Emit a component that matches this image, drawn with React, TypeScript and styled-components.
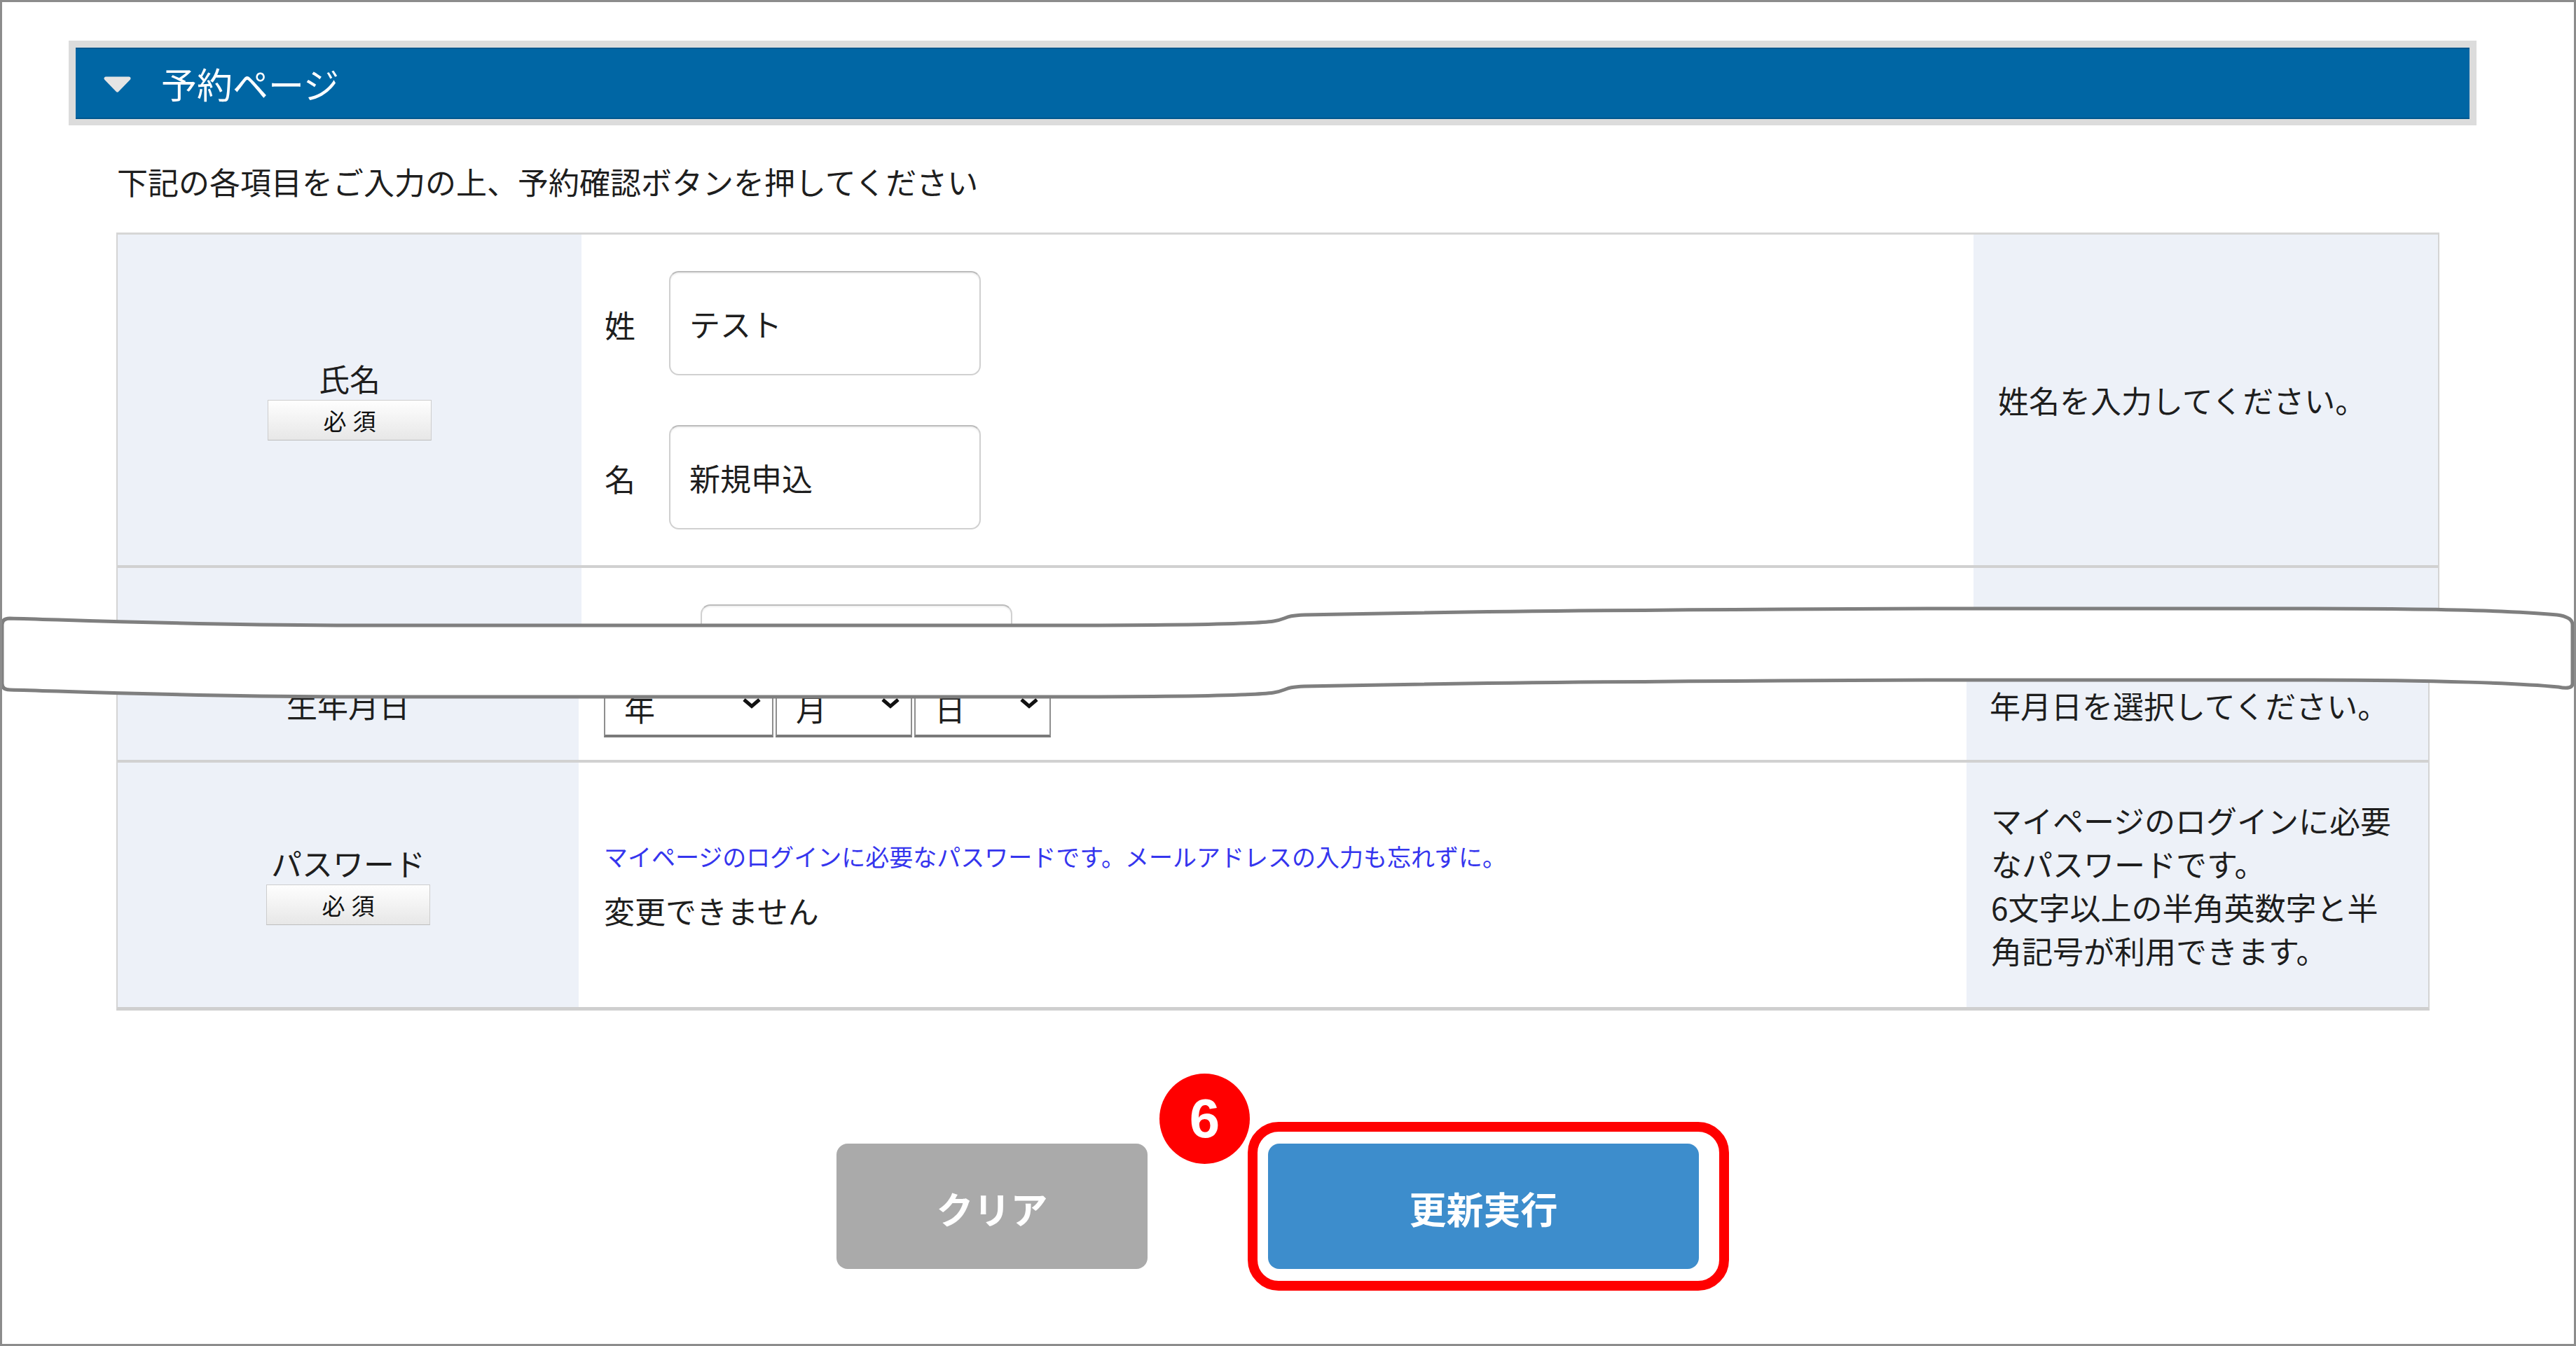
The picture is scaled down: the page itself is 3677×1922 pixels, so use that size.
import React from "react";
import styled, { createGlobalStyle } from "styled-components";

const GlobalStyle = createGlobalStyle`
  html, body {
    margin: 0;
    padding: 0;
    background: #ffffff;
  }
  body {
    font-family: "Noto Sans CJK JP", "Noto Sans", sans-serif;
    color: #1e1e1e;
  }
`;

const Frame = styled.div`
  position: relative;
  box-sizing: border-box;
  width: 3677px;
  height: 1922px;
  border: 3px solid #8c8c8c;
  background: #fff;
  overflow: hidden;
`;

const SectionHeader = styled.div`
  margin: 55px 139px 0 95px;
  padding: 10px 10px 9px;
  background: #dcdcdc;
`;

const HeaderBar = styled.div`
  display: flex;
  align-items: center;
  gap: 42px;
  box-sizing: border-box;
  height: 102px;
  padding-left: 39px;
  background: #0066a4;
  border-top: 2px solid #00578e;
  border-bottom: 2px solid #00578e;
  color: #fff;

  svg {
    margin-top: 4px;
  }
`;

const HeaderTitle = styled.h2`
  margin: 0;
  font-size: 51px;
  font-weight: 400;
  line-height: 1;
`;

const Intro = styled.p`
  margin: 54px 0 0 164px;
  font-size: 44px;
  line-height: 52px;
`;

const Fragment = styled.div<{ $width: number }>`
  box-sizing: border-box;
  width: ${(p) => p.$width}px;
  margin-left: 163px;
  border-left: 2px solid #d4d4d4;
  border-right: 2px solid #d4d4d4;
`;

const UpperFragment = styled(Fragment)`
  margin-top: 47px;
  border-top: 3px solid #d6d6d6;
`;

const LowerFragment = styled(Fragment)`
  border-bottom: 5px solid #cfcfcf;
`;

const Row = styled.div<{ $cols: string; $height: number; $divider?: number }>`
  display: grid;
  grid-template-columns: ${(p) => p.$cols};
  height: ${(p) => p.$height}px;
  border-bottom: ${(p) => p.$divider ?? 0}px solid #d1d1d1;
  overflow: hidden;
`;

const LabelCell = styled.div<{ $bottom?: number }>`
  display: flex;
  flex-direction: column;
  align-items: center;
  justify-content: ${(p) => (p.$bottom !== undefined ? "flex-end" : "center")};
  padding-bottom: ${(p) => p.$bottom ?? 0}px;
  background: #edf1f8;
`;

const LabelText = styled.span`
  font-size: 44px;
  line-height: 52px;
`;

const RequiredBadge = styled.span`
  display: flex;
  align-items: center;
  justify-content: center;
  box-sizing: border-box;
  width: 234px;
  height: 58px;
  margin-top: 5px;
  padding-left: 9px;
  border: 1px solid #cdcdcd;
  border-bottom-color: #bdbdbd;
  background: linear-gradient(#fefefe, #e7e7e7);
  font-size: 33px;
  letter-spacing: 9px;
  color: #111;
`;

const ContentCell = styled.div<{ $pad: number; $bottom?: number; $top?: number }>`
  display: flex;
  flex-direction: column;
  justify-content: ${(p) =>
    p.$bottom !== undefined ? "flex-end" : p.$top !== undefined ? "flex-start" : "center"};
  padding: ${(p) => p.$top ?? 0}px 0 ${(p) => p.$bottom ?? 0}px ${(p) => p.$pad}px;
  background: #fff;
`;

const NameFields = styled(ContentCell)`
  gap: 71px;
`;

const FieldLine = styled.div`
  display: flex;
  align-items: center;
  gap: 48px;
`;

const FieldLabel = styled.span`
  width: 44px;
  margin-top: 3px;
  font-size: 44px;
  line-height: 52px;
`;

const TextInput = styled.input`
  box-sizing: border-box;
  width: 445px;
  height: 149px;
  padding: 2px 0 0 27px;
  border: 2px solid #d0d0d0;
  border-top-color: #bcbcbc;
  border-radius: 14px;
  box-shadow: inset 0 2px 2px rgba(0, 0, 0, 0.06);
  background: #fff;
  font-family: inherit;
  font-size: 44px;
  color: #1e1e1e;
  outline: none;
`;

const NoteCell = styled.div<{ $pad: number; $bottom?: number; $lh?: number }>`
  display: flex;
  flex-direction: column;
  justify-content: ${(p) => (p.$bottom !== undefined ? "flex-end" : "center")};
  padding: 0 0 ${(p) => p.$bottom ?? 0}px ${(p) => p.$pad}px;
  background: #edf1f8;
  font-size: 44px;
  line-height: ${(p) => p.$lh ?? 52}px;
  white-space: nowrap;
`;

const SelectGroup = styled.div`
  display: flex;
  gap: 3px;
`;

const SelectBox = styled.div<{ $width: number }>`
  display: flex;
  align-items: center;
  justify-content: space-between;
  box-sizing: border-box;
  width: ${(p) => p.$width}px;
  height: 82px;
  padding: 0 15px 0 27px;
  border: 2px solid #8e8e8e;
  border-bottom: 4px solid #7a7a7a;
  background: #fff;
  font-size: 44px;
  line-height: 52px;

  svg {
    margin-bottom: 14px;
  }
`;

const HintText = styled.span`
  font-size: 34px;
  line-height: 44px;
  color: #3535ee;
  white-space: nowrap;
`;

const PlainText = styled.span`
  margin-top: 29px;
  font-size: 44px;
  line-height: 52px;
`;

const ButtonRow = styled.div`
  display: flex;
  justify-content: center;
  gap: 172px;
  box-sizing: border-box;
  width: 3316px;
  margin: 190px 0 0 163px;
  padding-right: 29px;
`;

const ActionButton = styled.button<{ $color: string; $width: number }>`
  width: ${(p) => p.$width}px;
  height: 179px;
  padding-top: 6px;
  border: none;
  border-radius: 16px;
  background: ${(p) => p.$color};
  color: #fff;
  font-family: inherit;
  font-size: 53px;
  font-weight: 700;
  cursor: pointer;
`;

const HighlightWrap = styled.div`
  position: relative;
  display: flex;
`;

const HighlightRing = styled.span`
  position: absolute;
  top: -31px;
  right: -43px;
  bottom: -31px;
  left: -29px;
  border: 14px solid #ff0000;
  border-radius: 44px;
  pointer-events: none;
`;

const StepBadge = styled.span`
  position: absolute;
  top: -100px;
  left: -155px;
  z-index: 2;
  display: flex;
  align-items: center;
  justify-content: center;
  width: 129px;
  height: 129px;
  border-radius: 50%;
  background: #ff0000;
  color: #fff;
  font-family: "Liberation Sans", Arial, sans-serif;
  font-size: 78px;
  font-weight: 700;
`;

const TearOverlay = styled.svg`
  position: absolute;
  top: 857px;
  left: -3px;
  width: 3677px;
  height: 150px;
  z-index: 3;
`;

const UPPER_COLS = "662px 1987px 663px";
const LOWER_COLS = "658px 1981px 659px";

function HeaderTriangle() {
  return (
    <svg width="41" height="24" viewBox="0 0 41 24">
      <polygon
        points="4,3 37,3 20.5,20"
        fill="#e4e4e4"
        stroke="#e4e4e4"
        strokeWidth="5"
        strokeLinejoin="round"
      />
    </svg>
  );
}

function Chevron() {
  return (
    <svg width="28" height="16" viewBox="0 0 28 16">
      <polyline
        points="3,3 14,12.5 25,3"
        fill="none"
        stroke="#111"
        strokeWidth="5"
        strokeLinejoin="miter"
      />
    </svg>
  );
}

function Tear() {
  const d = [
    "M 3 892 Q 3 883 14 883",
    "C 120 886 260 892 480 893 L 1500 893",
    "C 1680 893 1790 891 1818 887",
    "C 1838 884 1832 879 1862 878",
    "C 2150 872 2450 870 2750 869 L 3300 869",
    "C 3480 869 3600 873 3650 878 Q 3672 881 3672 892",
    "L 3672 976 Q 3672 985 3652 981",
    "C 3600 976 3480 971 3300 971 L 2750 971",
    "C 2450 972 2150 974 1862 980",
    "C 1832 981 1838 986 1818 989",
    "C 1790 993 1680 995 1500 995 L 480 995",
    "C 260 994 120 988 14 985 Q 3 985 3 976 Z",
  ].join(" ");
  return (
    <TearOverlay viewBox="0 860 3677 150">
      <path d={d} fill="#ffffff" stroke="#7f7f7f" strokeWidth="5" strokeLinejoin="round" />
    </TearOverlay>
  );
}

export default function App() {
  return (
    <>
      <GlobalStyle />
      <Frame>
        <SectionHeader>
          <HeaderBar>
            <HeaderTriangle />
            <HeaderTitle>予約ページ</HeaderTitle>
          </HeaderBar>
        </SectionHeader>

        <Intro>下記の各項目をご入力の上、予約確認ボタンを押してください</Intro>

        <UpperFragment $width={3316}>
          <Row $cols={UPPER_COLS} $height={472} $divider={4}>
            <LabelCell>
              <LabelText>氏名</LabelText>
              <RequiredBadge>必須</RequiredBadge>
            </LabelCell>
            <NameFields $pad={33}>
              <FieldLine>
                <FieldLabel>姓</FieldLabel>
                <TextInput readOnly defaultValue="テスト" />
              </FieldLine>
              <FieldLine>
                <FieldLabel>名</FieldLabel>
                <TextInput readOnly defaultValue="新規申込" />
              </FieldLine>
            </NameFields>
            <NoteCell $pad={35}>姓名を入力してください。</NoteCell>
          </Row>
          <Row $cols={UPPER_COLS} $height={119}>
            <LabelCell />
            <ContentCell $pad={170} $top={52}>
              <TextInput readOnly defaultValue="" />
            </ContentCell>
            <NoteCell $pad={35} />
          </Row>
        </UpperFragment>

        <LowerFragment $width={3302}>
          <Row $cols={LOWER_COLS} $height={155} $divider={4}>
            <LabelCell $bottom={53}>
              <LabelText>生年月日</LabelText>
            </LabelCell>
            <ContentCell $pad={36} $bottom={32}>
              <SelectGroup>
                <SelectBox $width={242}>
                  年<Chevron />
                </SelectBox>
                <SelectBox $width={195}>
                  月<Chevron />
                </SelectBox>
                <SelectBox $width={195}>
                  日<Chevron />
                </SelectBox>
              </SelectGroup>
            </ContentCell>
            <NoteCell $pad={33} $bottom={52}>
              年月日を選択してください。
            </NoteCell>
          </Row>
          <Row $cols={LOWER_COLS} $height={349}>
            <LabelCell>
              <LabelText>パスワード</LabelText>
              <RequiredBadge>必須</RequiredBadge>
            </LabelCell>
            <ContentCell $pad={36}>
              <HintText>
                マイページのログインに必要なパスワードです。メールアドレスの入力も忘れずに。
              </HintText>
              <PlainText>変更できません</PlainText>
            </ContentCell>
            <NoteCell $pad={35} $lh={62}>
              マイページのログインに必要
              <br />
              なパスワードです。
              <br />
              6文字以上の半角英数字と半
              <br />
              角記号が利用できます。
            </NoteCell>
          </Row>
        </LowerFragment>

        <ButtonRow>
          <ActionButton type="button" $color="#aaaaaa" $width={444}>
            クリア
          </ActionButton>
          <HighlightWrap>
            <ActionButton type="button" $color="#3d8dcc" $width={615}>
              更新実行
            </ActionButton>
            <HighlightRing />
            <StepBadge>6</StepBadge>
          </HighlightWrap>
        </ButtonRow>

        <Tear />
      </Frame>
    </>
  );
}
